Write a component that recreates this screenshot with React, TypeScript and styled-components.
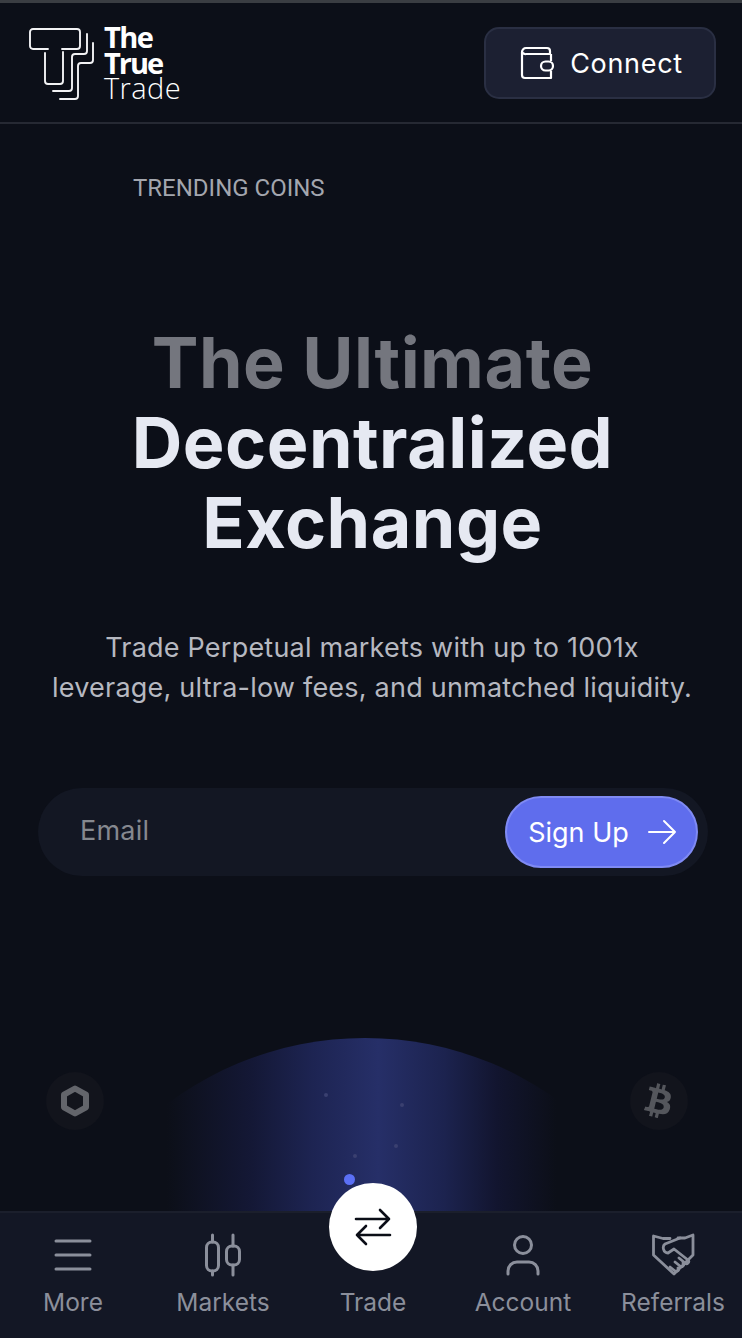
import React from "react";
import styled, { createGlobalStyle } from "styled-components";
import { FaBtc } from "react-icons/fa";

const Global = createGlobalStyle`
  html, body { margin: 0; padding: 0; background: #0c0f18; }
  * { box-sizing: border-box; }
`;

const Page = styled.div`
  position: relative;
  width: 742px;
  height: 1338px;
  overflow: hidden;
  background: #0c0f18;
  font-family: Inter, "Liberation Sans", sans-serif;
  display: flex;
  flex-direction: column;
`;

const TopStrip = styled.div`
  height: 3px;
  background: #3a3d42;
  flex: none;
`;

const Header = styled.header`
  height: 121px;
  flex: none;
  border-bottom: 2px solid #262933;
  display: flex;
  align-items: center;
  justify-content: space-between;
  padding: 0 26px 0 29px;
`;

const Brand = styled.div`
  display: flex;
  align-items: center;
  gap: 9px;
  margin-top: 3px;
`;

const Wordmark = styled.div`
  display: flex;
  flex-direction: column;
  color: #fff;
  font-family: "Open Sans", sans-serif;
  font-size: 29px;
  line-height: 26px;
  margin-top: -3px;
`;

const WordLine = styled.div<{ $light?: boolean; $tight?: boolean }>`
  height: 25.5px;
  font-weight: ${(p) => (p.$light ? 300 : 700)};
  letter-spacing: ${(p) => (p.$light ? "0.4px" : p.$tight ? "-2px" : "-1.5px")};
`;

const ConnectButton = styled.button`
  width: 232px;
  height: 72px;
  margin-top: 1px;
  padding-left: 9px;
  border-radius: 15px;
  border: 2px solid #2a2f43;
  background: #1c2032;
  color: #fff;
  display: flex;
  align-items: center;
  justify-content: center;
  gap: 16px;
  font-family: Inter, sans-serif;
  font-size: 27px;
  font-weight: 400;
  letter-spacing: 0.7px;
`;

const Main = styled.main`
  flex: 1;
  display: flex;
  flex-direction: column;
  align-items: center;
`;

const Trending = styled.div`
  align-self: flex-start;
  margin: 50px 0 0 133px;
  font-family: Roboto, sans-serif;
  font-size: 24px;
  line-height: 28px;
  color: #a3a6ae;
`;

const Title = styled.h1`
  margin: 121px 0 0 3px;
  text-align: center;
  font-family: Inter, sans-serif;
  font-size: 70px;
  line-height: 80px;
  font-weight: 700;
  letter-spacing: 0.5px;
  color: #e6e9f2;
`;

const TitleMuted = styled.span`
  color: #74767e;
`;

const Lead = styled.p`
  margin: 65px 0 0 2px;
  text-align: center;
  font-family: Inter, sans-serif;
  font-size: 27px;
  line-height: 40px;
  letter-spacing: 0.22px;
  color: #b6b8c0;
`;

const SignupBar = styled.form`
  width: 670px;
  height: 88px;
  margin: 80px 0 0 4px;
  border-radius: 44px;
  background: #131723;
  display: flex;
  align-items: center;
  justify-content: space-between;
  padding: 0 10px 0 42px;
`;

const EmailLabel = styled.span`
  margin-top: -3px;
  font-size: 27px;
  letter-spacing: 0.2px;
  color: #85888f;
`;

const SignUpButton = styled.button`
  width: 193px;
  height: 72px;
  padding-left: 8px;
  border-radius: 36px;
  border: 2px solid #7f8af3;
  background: #5f6ded;
  color: #fff;
  font-family: Inter, sans-serif;
  font-size: 27px;
  display: flex;
  align-items: center;
  justify-content: center;
  gap: 18px;
`;

const Dome = styled.div`
  position: absolute;
  left: 35px;
  top: 1038px;
  width: 660px;
  height: 660px;
  overflow: hidden;
  border-radius: 50%;
  background: linear-gradient(90deg, #0c0f18 20%, #141836 33%, #1d2452 42%, #262f68 52%, #1c234f 62%, #12152f 70%, #0c0f18 79%);
`;

const Speck = styled.span<{ $x: number; $y: number }>`
  position: absolute;
  left: ${(p) => p.$x}px;
  top: ${(p) => p.$y}px;
  width: 4px;
  height: 4px;
  border-radius: 50%;
  background: #3a4070;
`;

const BlueDot = styled.span`
  position: absolute;
  left: 344px;
  top: 1174px;
  width: 11px;
  height: 11px;
  border-radius: 50%;
  background: #5b70f5;
`;

const Coin = styled.div<{ $x: number }>`
  position: absolute;
  left: ${(p) => p.$x}px;
  top: 1072px;
  width: 58px;
  height: 58px;
  border-radius: 50%;
  background: #12141c;
  display: flex;
  align-items: center;
  justify-content: center;
  color: #54565c;
`;

const BtcMark = styled(FaBtc)`
  width: 34px;
  height: 34px;
  transform: rotate(14deg);
`;

const BottomNav = styled.nav`
  position: relative;
  height: 127px;
  flex: none;
  background: #131725;
  border-top: 2px solid #1b1f2c;
  display: grid;
  grid-template-columns: repeat(5, 150px);
  margin-left: -2px;
  width: 750px;
`;

const NavItem = styled.div`
  display: flex;
  flex-direction: column;
  align-items: center;
  padding-top: 18px;
  color: #8b8f9b;
  font-size: 24.5px;
  line-height: 30px;
`;

const NavIcon = styled.div`
  height: 48px;
  margin-bottom: 8px;
  display: flex;
  align-items: center;
  justify-content: center;
`;

const TradeBubble = styled.div`
  position: absolute;
  left: 331px;
  top: -30px;
  width: 88px;
  height: 88px;
  border-radius: 50%;
  background: #fff;
  display: flex;
  align-items: center;
  justify-content: center;
`;

const Logo = () => (
  <svg width="66" height="73" viewBox="0 0 66 73" fill="none" stroke="#f2f2f4" strokeWidth="1.9" strokeLinecap="round" strokeLinejoin="round">
    <path d="M19 21H4a3 3 0 0 1-3-3V4a3 3 0 0 1 3-3h44a3 3 0 0 1 3 3v14a3 3 0 0 1-3 3H33" />
    <path d="M16 25v28a3 3 0 0 0 3 3h12a3 3 0 0 0 3-3V24" />
    <path d="M58 6v17a3 3 0 0 1-3 3H46a3 3 0 0 0-3 3v31a3 3 0 0 1-3 3H24" />
    <path d="M64 15v17a3 3 0 0 1-3 3H52a3 3 0 0 0-3 3v30a3 3 0 0 1-3 3H31" />
  </svg>
);

const Wallet = () => (
  <svg width="34" height="34" viewBox="0 0 34 34" fill="none" stroke="#fff" strokeWidth="2.2" strokeLinejoin="round">
    <path d="M2 6a4 4 0 0 1 4-4h21a3 3 0 0 1 3 3v3H6M2 6v23a3 3 0 0 0 3 3h26v-7M6 8a4 4 0 0 1-4-2M31 8v7" />
    <rect x="21" y="15.500" width="12" height="9" rx="4.500" />
  </svg>
);

const Arrow = () => (
  <svg width="30" height="26" viewBox="0 0 30 26" fill="none" stroke="#fff" strokeWidth="2" strokeLinecap="round" strokeLinejoin="round">
    <path d="M2 13h26M17 2l11 11-11 11" />
  </svg>
);

const Hexagon = () => (
  <svg width="30" height="32" viewBox="0 0 30 32" fill="none" stroke="#63656b" strokeWidth="6" strokeLinejoin="round">
    <path d="M15 3.500 26 9.700v12.600L15 28.500 4 22.300V9.700z" />
  </svg>
);

const Menu = () => (
  <svg width="38" height="34" viewBox="0 0 38 34" fill="none" stroke="#8b8f9b" strokeWidth="3" strokeLinecap="round">
    <path d="M2 3h34M2 17h34M2 31h34" />
  </svg>
);

const Candles = () => (
  <svg width="38" height="44" viewBox="0 0 38 44" fill="none" stroke="#8b8f9b" strokeWidth="3" strokeLinecap="round">
    <rect x="2.500" y="9" width="12" height="29" rx="5.500" />
    <rect x="22.500" y="13" width="13" height="19" rx="5.500" />
    <path d="M8.500 2v7M8.500 38v4M29 2v11M29 32v10" />
  </svg>
);

const Swap = () => (
  <svg width="38" height="38" viewBox="0 0 38 38" fill="none" stroke="#0b0e17" strokeWidth="2.600" strokeLinecap="round" strokeLinejoin="round">
    <path d="M2 11h33M26 2l9 9-9 9M36 27H3M12 18l-9 9 9 9" />
  </svg>
);

const Person = () => (
  <svg width="34" height="42" viewBox="0 0 34 42" fill="none" stroke="#8b8f9b" strokeWidth="3" strokeLinecap="round">
    <circle cx="17" cy="11" r="8.500" />
    <path d="M2 40v-3a9 9 0 0 1 9-9h12a9 9 0 0 1 9 9v3" />
  </svg>
);

const Handshake = () => (
  <svg width="46" height="44" viewBox="0 0 46 44" fill="none" stroke="#8b8f9b" strokeWidth="2.800" strokeLinejoin="round" strokeLinecap="round">
    <path d="M20 5.500h-7L3.500 3v19L24 41l19-19V2l-8 3h-7" />
    <path d="M30 5 15 11c-3 2-2 9 3 9l6-4 14 11c2 2-1 5-3 3l-6-5M33 30c2 2-1 5-3 3l-5-4M28 35c2 2-1 4-3 3l-5-4" />
  </svg>
);

export default function App() {
  return (
    <Page>
      <Global />
      <TopStrip />
      <Header>
        <Brand>
          <Logo />
          <Wordmark>
            <WordLine>The</WordLine>
            <WordLine $tight>True</WordLine>
            <WordLine $light>Trade</WordLine>
          </Wordmark>
        </Brand>
        <ConnectButton>
          <Wallet />
          Connect
        </ConnectButton>
      </Header>
      <Main>
        <Trending>TRENDING COINS</Trending>
        <Title>
          <TitleMuted>The Ultimate</TitleMuted>
          <br />
          Decentralized
          <br />
          Exchange
        </Title>
        <Lead>
          Trade Perpetual markets with up to 1001x
          <br />
          leverage, ultra-low fees, and unmatched liquidity.
        </Lead>
        <SignupBar>
          <EmailLabel>Email</EmailLabel>
          <SignUpButton type="button">
            Sign Up
            <Arrow />
          </SignUpButton>
        </SignupBar>
      </Main>
      <Dome>
        <Speck $x={289} $y={55} />
        <Speck $x={365} $y={65} />
        <Speck $x={318} $y={116} />
        <Speck $x={359} $y={106} />
      </Dome>
      <BlueDot />
      <Coin $x={46}>
        <Hexagon />
      </Coin>
      <Coin $x={630}>
        <BtcMark />
      </Coin>
      <BottomNav>
        <NavItem>
          <NavIcon><Menu /></NavIcon>
          More
        </NavItem>
        <NavItem>
          <NavIcon><Candles /></NavIcon>
          Markets
        </NavItem>
        <NavItem>
          <NavIcon />
          Trade
        </NavItem>
        <NavItem>
          <NavIcon><Person /></NavIcon>
          Account
        </NavItem>
        <NavItem>
          <NavIcon><Handshake /></NavIcon>
          Referrals
        </NavItem>
        <TradeBubble>
          <Swap />
        </TradeBubble>
      </BottomNav>
    </Page>
  );
}
